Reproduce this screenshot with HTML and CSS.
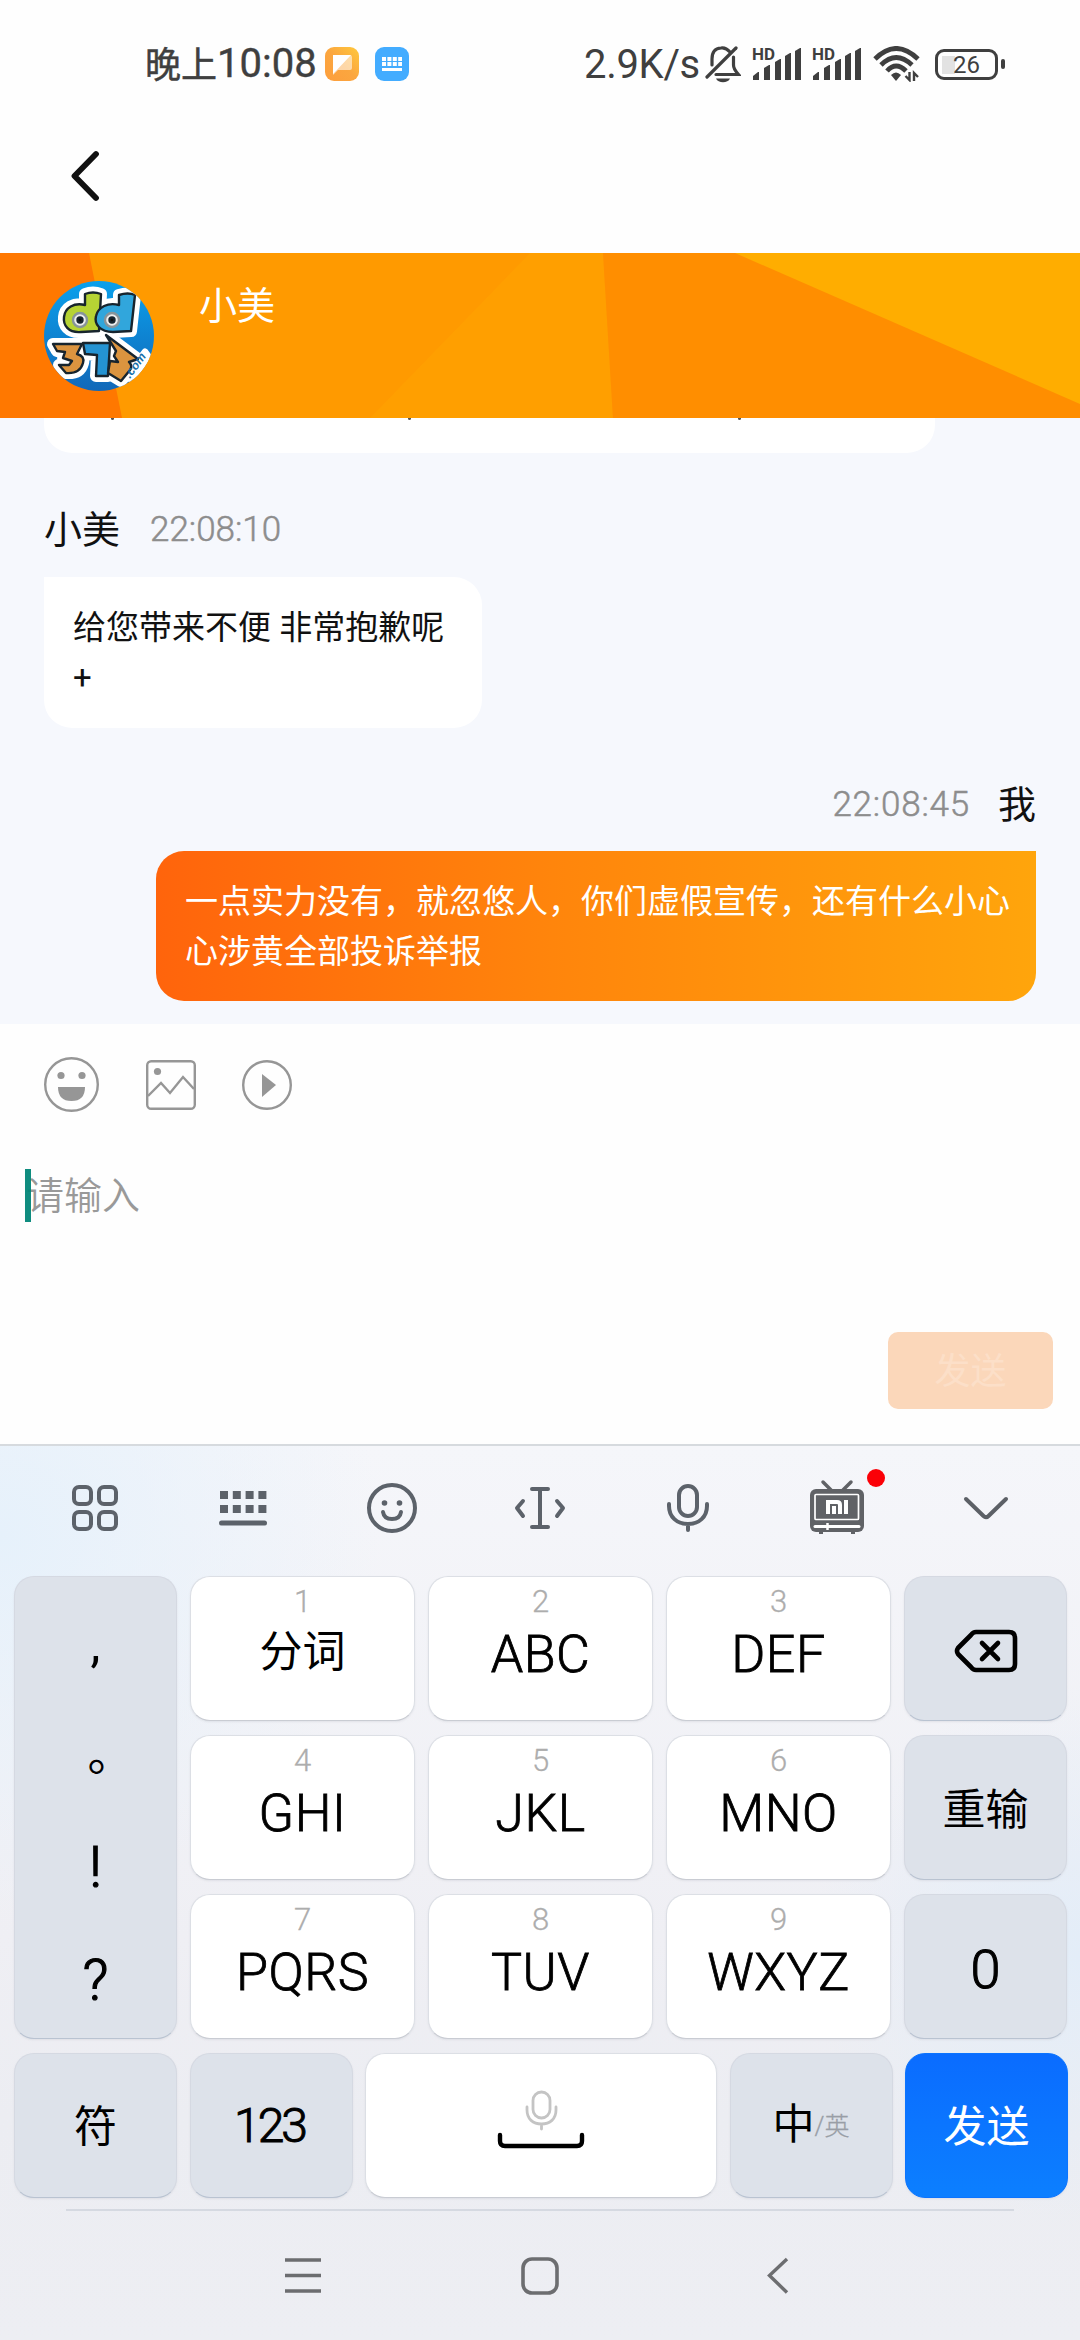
FILE: index.html
```html
<!DOCTYPE html>
<html lang="zh-CN">
<head>
<meta charset="utf-8">
<title>小美</title>
<link rel="stylesheet" href="styles.css">
</head>
<body>
<div class="screen">
  <header class="status">
    <span class="clock"><span class="clock-cjk">晚上</span><span class="clock-num">10:08</span></span>
    <svg class="app-icon" viewBox="0 0 34 34"><defs><linearGradient id="og" x1="1" y1="0" x2="0" y2="1"><stop offset="0" stop-color="#ffc93c"/><stop offset=".5" stop-color="#fba63f"/><stop offset="1" stop-color="#fd9e3c"/></linearGradient></defs><rect width="34" height="34" rx="9" fill="url(#og)"/><path d="M8 8h17q2 0 2 2v11q0 2-2 2H13l-5 5z" fill="#fff" opacity=".55"/><path d="M8 8h18L8 27z" fill="#fff"/></svg>
    <svg class="app-icon second" viewBox="0 0 34 34"><rect width="34" height="34" rx="9" fill="#43acff"/><path d="M7 12h20M7 17h20" stroke="#fff" stroke-width="4" stroke-dasharray="4 1.4"/><path d="M7 22.500h20" stroke="#fff" stroke-width="3"/></svg>
    <span class="speed">2.9K/s</span>
    <svg class="bell" viewBox="0 0 36 38"><g fill="none" stroke="#3f3f3f" stroke-width="3.200" stroke-linecap="round"><path d="M25 7C22 3.500 19 2.500 16 3 9 3.500 7 8 7 14v6"/><path d="M28.500 12v8c0 4 2 6 5 9.500H11"/><path d="M2 32 31 3"/></g><path d="M11 33.500h14c-2 5-12 5-14 0z" fill="#3f3f3f"/></svg>
    <svg class="signal" viewBox="0 -6 52 42"><text x="1" y="14" textLength="23" lengthAdjust="spacingAndGlyphs" class="hd">HD</text><g fill="#3f3f3f"><path d="M2 34v-4l5-4h1v8z"/><path d="M13 34V22l5-3h1v15z"/><path d="M24 34V16l5-3h1v21z"/><path d="M34 34V10l5-3h1v27z"/><path d="M44 34V5l5-3h1v32z"/></g></svg>
    <svg class="signal two" viewBox="0 -6 52 42"><text x="1" y="14" textLength="23" lengthAdjust="spacingAndGlyphs" class="hd">HD</text><g fill="#3f3f3f"><path d="M2 34v-4l5-4h1v8z"/><path d="M13 34V22l5-3h1v15z"/><path d="M24 34V16l5-3h1v21z"/><path d="M34 34V10l5-3h1v27z"/><path d="M44 34V5l5-3h1v32z"/></g></svg>
    <svg class="wifi" viewBox="0 0 48 36"><g fill="none" stroke="#3f3f3f" stroke-width="4.800"><path d="M2 13Q23-8 45 13"/><path d="M8 19Q23 4 39 19"/><path d="M14 25Q23 15 33 25"/></g><path d="M18 29q5-5 10 0l-5 6z" fill="#3f3f3f"/><path d="M36.500 26v8l-4-4M41 35v-8l4 4" fill="none" stroke="#3f3f3f" stroke-width="2.400"/></svg>
    <span class="battery"><span class="battery-body">26</span><span class="battery-tip"></span></span>
  </header>

  <nav class="topbar">
    <svg class="back" viewBox="0 0 32 52"><path d="M27 4 5.500 26 27 48" fill="none" stroke="#111" stroke-width="5.800" stroke-linecap="round" stroke-linejoin="round"/></svg>
  </nav>

  <section class="banner">
    <svg class="banner-bg" viewBox="0 0 1080 165" preserveAspectRatio="none"><rect width="1080" height="165" fill="#ff9a00"/><path d="M0 0h89l33 165H0z" fill="#ff7800"/><path d="M530 0h73l10 165H370z" fill="#ff9f00"/><path d="M603 0h477v165H613z" fill="#ff8e00"/><path d="M735 0h345v151z" fill="#ffad00"/></svg>
    <svg class="avatar" viewBox="0 0 110 110"><defs><linearGradient id="av" x1="0" y1="0" x2="0" y2="1"><stop offset="0" stop-color="#0aa0ec"/><stop offset="1" stop-color="#1268b8"/></linearGradient><clipPath id="round"><circle cx="55" cy="55" r="55"/></clipPath>
      <path id="d1" d="M41 13q8-3 16 0l-2 37-18 1C24 52 19 44 20 36c1-9 10-15 21-12z"/>
      <path id="d2" d="M75 14q9-3 16 0l-4 36-18 1C56 51 50 43 52 35c2-9 12-14 23-11z"/>
      <path id="n1" d="M9 63h29l-5 10q8 2 6 9-3 11-17 10l-7-8h10l3-4-9-3 2-6-8-1z"/>
      <path id="n2" d="M39 62h27l-2 33H52l1-21-12-1z"/>
      <path id="n3" d="m62 54 32 24-9 3q4 4 1 8l-9 11-13-8 2-12 8 1-4-6 2-5z"/>
      <path id="tag" d="m82 97 19-26 5 7-14 20z"/></defs>
      <g clip-path="url(#round)"><rect width="110" height="110" fill="url(#av)"/>
      <g fill="#fff" stroke="#fff" stroke-width="12" stroke-linejoin="round"><use href="#d1"/><use href="#d2"/><use href="#n1"/><use href="#n2"/><use href="#n3"/><use href="#tag" stroke-width="7"/></g>
      <g stroke="#17242d" stroke-width="2.400" stroke-linejoin="round"><use href="#d1" fill="#b6d334"/><use href="#d2" fill="#31a6dc"/>
      <circle cx="36" cy="39" r="7" fill="#eee" stroke="#87949a"/><circle cx="68" cy="39" r="7" fill="#eee" stroke="#87949a"/><circle cx="36" cy="39" r="2.500" fill="#111"/><circle cx="68" cy="39" r="2.500" fill="#111"/>
      <use href="#n1" fill="#db943f"/><use href="#n2" fill="#2493d2"/><use href="#n3" fill="#db943f"/></g>
      <text x="86" y="98" transform="rotate(-54 86 98)" class="dotcom">.com</text></g></svg>
    <h1 class="agent">小美</h1>
  </section>

  <main class="chat">
    <div class="bubble clipped"><i class="speck s1"></i><i class="speck s2"></i><i class="speck s3"></i></div>
    <div class="meta"><span class="who">小美</span><span class="time">22:08:10</span></div>
    <div class="bubble them">给您带来不便&nbsp;非常抱歉呢<br>+</div>
    <div class="meta mine"><span class="time">22:08:45</span><span class="who">我</span></div>
    <div class="bubble me">一点实力没有，就忽悠人，你们虚假宣传，还有什么小心心涉黄全部投诉举报</div>
  </main>

  <section class="composer">
    <div class="tools">
      <svg width="55" height="55" viewBox="0 0 55 55"><circle cx="27.500" cy="27.500" r="26.300" fill="none" stroke="#969696" stroke-width="2.400"/><circle cx="17" cy="18.500" r="3.600" fill="#969696"/><circle cx="38" cy="18.500" r="3.600" fill="#969696"/><path d="M14 30h27q0 14-13.500 14T14 30z" fill="#969696"/></svg>
      <svg class="t2" width="50" height="50" viewBox="0 0 50 50" fill="none" stroke="#969696" stroke-width="2.400"><rect x="1.200" y="1.200" width="47.600" height="47.600" rx="4"/><circle cx="11.500" cy="11.500" r="3.600" fill="#969696" stroke="none"/><path d="m2 36 13-13 9 10 13-16 11 12"/></svg>
      <svg class="t3" width="50" height="50" viewBox="0 0 50 50"><circle cx="25" cy="25" r="23.800" fill="none" stroke="#969696" stroke-width="2.400"/><path d="M20 14v23l14-12z" fill="#969696"/></svg>
    </div>
    <div class="field"><span class="placeholder">请输入</span><i class="caret"></i></div>
    <button class="send">发送</button>
  </section>

  <section class="keyboard">
    <div class="kb-tools">
      <svg viewBox="0 0 60 60" class="ic"><g fill="none" stroke="#5c626a" stroke-width="4"><rect x="9" y="9" width="17" height="17" rx="5"/><rect x="34" y="9" width="17" height="17" rx="5"/><rect x="9" y="34" width="17" height="17" rx="5"/><rect x="34" y="34" width="17" height="17" rx="5"/></g></svg>
      <svg viewBox="0 0 60 60" class="ic"><path d="M7 17h47M7 31h47" stroke="#5c626a" stroke-width="8" stroke-dasharray="8 4.800"/><path d="M8.500 45h43" stroke="#5c626a" stroke-width="5" stroke-linecap="round"/></svg>
      <svg viewBox="0 0 60 60" class="ic"><g fill="none" stroke="#5c626a" stroke-width="4" stroke-linecap="round"><circle cx="30" cy="30" r="23"/><path d="M21 34q1 7 9 7t9-7"/></g><circle cx="22.500" cy="25" r="2.800" fill="#5c626a"/><circle cx="37.500" cy="25" r="2.800" fill="#5c626a"/></svg>
      <svg viewBox="0 0 60 60" class="ic"><g fill="none" stroke="#5c626a" stroke-width="4" stroke-linecap="round" stroke-linejoin="round"><path d="M30 11v38M22 11h16M22 49h16"/><path d="m13 23-6 7 6 8M47 23l6 7-6 8"/></g></svg>
      <svg viewBox="0 0 60 60" class="ic"><g fill="none" stroke="#5c626a" stroke-width="4" stroke-linecap="round"><rect x="21" y="8" width="18" height="30" rx="9"/><path d="M11 26v2c0 11 8 18 19 18s19-7 19-18v-2M30 46v6"/></g></svg>
      <span class="tv"><svg viewBox="0 0 60 60" class="ic"><path d="m16 4 8 8m20-8-8 8" stroke="#606266" stroke-width="3.500" stroke-linecap="round"/><rect x="3" y="11" width="54" height="43" rx="6" fill="#606266"/><path d="M12 54h4v2h-4zm32 0h4v2h-4z" fill="#606266"/><rect x="8" y="16.500" width="43.500" height="25" rx="1" fill="none" stroke="#fff" stroke-width="1.700"/><path d="M8 48.500h44" stroke="#fff" stroke-width="3" stroke-linecap="round"/><path d="M20.500 45v7" stroke="#fff" stroke-width="2.500"/><path d="M21 36V24h9q3 0 3 3v9M27 28v8M39 22v14" fill="none" stroke="#fff" stroke-width="4"/></svg><i class="dot"></i></span>
      <svg viewBox="0 0 60 60" class="ic"><path d="m11 21 17.500 17q2.500 2.500 5 0L51 21" fill="none" stroke="#5c6066" stroke-width="4" stroke-linecap="round"/></svg>
    </div>

    <div class="keys">
      <div class="key grey punct"><span class="p1">,</span><span class="p2">。</span><span class="p3">!</span><span class="p4">?</span></div>
      <div class="key"><small>1</small><b class="cjk">分词</b></div>
      <div class="key"><small>2</small><b>ABC</b></div>
      <div class="key"><small>3</small><b>DEF</b></div>
      <div class="key grey flat del"><svg width="64" height="46" viewBox="0 0 64 46"><path d="M22 4h33q6 0 6 6v26q0 6-6 6H22q-3 0-5-3L4 26q-2-3 0-6L17 7q2-3 5-3z" fill="none" stroke="#000" stroke-width="4.600" stroke-linejoin="round"/><path d="m28 15 16 16m0-16L28 31" stroke="#000" stroke-width="4.600" stroke-linecap="round"/></svg></div>
      <div class="key"><small>4</small><b>GHI</b></div>
      <div class="key"><small>5</small><b>JKL</b></div>
      <div class="key"><small>6</small><b>MNO</b></div>
      <div class="key grey flat han">重输</div>
      <div class="key"><small>7</small><b>PQRS</b></div>
      <div class="key"><small>8</small><b>TUV</b></div>
      <div class="key"><small>9</small><b>WXYZ</b></div>
      <div class="key grey flat zero">0</div>
    </div>
    <div class="keys-bottom">
      <div class="key grey flat han low">符</div>
      <div class="key grey flat num">123</div>
      <div class="key space"><svg width="90" height="62" viewBox="0 0 90 62"><g fill="none" stroke="#c4c4c4" stroke-width="2.800" stroke-linecap="round"><rect x="37" y="3" width="17" height="26" rx="8.500"/><path d="M31 18v3c0 9 6 14 14.500 14S60 30 60 21v-3M45.500 35v5"/></g><path d="M4 46v6q0 5 5 5h72q5 0 5-5v-6" fill="none" stroke="#000" stroke-width="4.400" stroke-linecap="round"/></svg></div>
      <div class="key grey flat lang"><span>中</span><small>/英</small></div>
      <div class="key blue flat han low">发送</div>
    </div>
    <hr class="rule">
    <nav class="sysnav">
      <svg viewBox="0 0 48 48" class="nv"><path d="M6 8h36M6 23.500h36M6 39h36" stroke="#6c6d70" stroke-width="3.600"/></svg>
      <svg viewBox="0 0 48 48" class="nv"><rect x="7" y="7" width="34" height="34" rx="9" fill="none" stroke="#6c6d70" stroke-width="3.600"/></svg>
      <svg viewBox="0 0 48 48" class="nv"><path d="M34 7 16.500 23.500 34 40.500" fill="none" stroke="#6c6d70" stroke-width="3.400"/></svg>
    </nav>
  </section>
</div>
</body>
</html>
```
FILE: styles.css
```css
* { box-sizing: border-box; }
body { margin: 0; background: #fefefe; font-family: Roboto, "Noto Sans CJK SC", sans-serif; color: #111; }
svg { display: block; flex: none; }
.screen { width: 1080px; height: 2340px; overflow: hidden; display: flex; flex-direction: column; }

/* status bar */
.status { height: 128px; flex: none; display: flex; align-items: center; padding-left: 145px; color: #3f3f3f; }
.clock { display: flex; align-items: center; width: 180px; line-height: 50px; white-space: nowrap; }
.clock-cjk { font: 400 36px/46px "Noto Sans CJK SC", sans-serif; -webkit-text-stroke: .5px; padding-bottom: 4px; }
.clock-num { font-size: 40px; font-weight: 400; letter-spacing: 0; -webkit-text-stroke: .4px; }
.app-icon { width: 34px; height: 34px; }
.app-icon.second { margin-left: 16px; }
.speed { margin-left: 175px; width: 121px; font-size: 40px; font-weight: 400; white-space: nowrap; letter-spacing: -.3px; }
.bell { width: 36px; height: 38px; }
.signal { width: 52px; height: 42px; margin: -6px 0 0 10px; }
.signal.two { margin-left: 8px; }
.hd { font: 700 17px Roboto, sans-serif; fill: #3f3f3f; }
.wifi { width: 48px; height: 36px; margin-left: 10px; }
.battery { display: flex; align-items: center; margin-left: 14px; gap: 3px; }
.battery-body { width: 63px; height: 31px; border: 3px solid #3f3f3f; border-radius: 9px; font-size: 24px; line-height: 26px; text-align: center; background: linear-gradient(#e2e2e2, #e2e2e2) 4px 4px / 13px 18px no-repeat; }
.battery-tip { width: 4px; height: 10px; border-radius: 2px; background: #3f3f3f; }

.topbar { height: 125px; flex: none; padding: 22px 0 0 69px; }
.back { width: 32px; height: 52px; }

/* agent banner */
.banner { height: 165px; flex: none; display: grid; grid-template-columns: 44px 110px 45px 1fr; }
.banner-bg { grid-area: 1 / 1 / 2 / 5; width: 1080px; height: 165px; }
.avatar { grid-area: 1 / 2; width: 110px; height: 110px; margin-top: 28px; }
.dotcom { font: italic 700 12px "Liberation Sans", sans-serif; fill: #176fa9; }
.agent { grid-area: 1 / 4; margin: 24px 0 0; font: 400 38px/52px "Noto Sans CJK SC", sans-serif; color: #fff; }

/* conversation */
.chat { height: 606px; flex: none; background: #f6f8fd; padding: 0 44px; display: flex; flex-direction: column; align-items: flex-start; }
.bubble { font-size: 33px; line-height: 50px; background: #fff; border-radius: 0 28px 28px 28px; }
.clipped { width: 891px; height: 35px; border-radius: 0 0 28px 28px; display: flex; }
.speck { width: 3px; height: 2px; background: #555; border-radius: 0 0 2px 2px; }
.s1 { margin-left: 67px; }
.s2 { margin-left: 294px; }
.s3 { margin-left: 327px; }
.meta { display: flex; align-items: center; height: 56px; margin-top: 46px; }
.who { font: 400 38px/56px "Noto Sans CJK SC", sans-serif; color: #111; }
.time { margin: 5px 0 0 30px; font-size: 35px; line-height: 56px; color: #8d8d8d; font-weight: 300; -webkit-text-stroke: .5px; letter-spacing: 0; }
.them { width: 438px; height: 151px; margin-top: 22px; padding: 26px 0 0 29px; }
.mine { align-self: flex-end; height: 50px; margin-top: 49px; }
.mine .who { margin-left: 28px; }
.mine .time { letter-spacing: .8px; }
.me { align-self: flex-end; width: 880px; height: 150px; margin-top: 24px; padding: 26px 22px 0 29px; color: #fff; background: linear-gradient(90deg, #ff640c, #ff850c 45%, #ffa50c); border-radius: 28px 0 28px 28px; }

/* message entry */
.composer { height: 420px; flex: none; background: #fefefe; }
.tools { height: 88px; padding: 33px 0 0 44px; display: flex; align-items: center; }
.t2 { margin-left: 47px; }
.t3 { margin-left: 46px; }
.field { margin-top: 57px; height: 54px; display: grid; padding-left: 25px; }
.placeholder { grid-area: 1 / 1; margin-top: -3px; padding-left: 1px; font: 350 38px/54px "Noto Sans CJK SC", sans-serif; color: #999; }
.caret { grid-area: 1 / 1; width: 6px; height: 53px; background: rgba(0, 133, 119, .94); }
.send { display: block; margin: 109px 0 0 888px; width: 165px; height: 77px; border: 0; border-radius: 10px; background: #fbd7ba; color: #fcdfc8; font: 400 36px/73px "Noto Sans CJK SC", sans-serif; padding: 0 0 4px; }

/* keyboard */
.keyboard { height: 896px; flex: none; border-top: 2px solid #d6dade; background: radial-gradient(circle at 0 10%, #e6f1fb 0, rgba(230, 241, 251, 0) 380px), radial-gradient(circle at 100% 57%, #e3edf8 0, rgba(227, 237, 248, 0) 270px), linear-gradient(#f5f6fa, #efeff4 55%, #ecedf2 75%, #edeef3); }
.kb-tools { height: 130px; padding: 32px 65px 0 65px; display: flex; justify-content: space-between; }
.ic { width: 60px; height: 60px; }
.tv { position: relative; }
.dot { position: absolute; left: 60px; top: -9px; width: 18px; height: 18px; border-radius: 50%; background: #fb0007; }
.keys { display: grid; padding: 0 13px 0 14px; grid-template: repeat(3, 145px) / 163px 225px 225px 225px 163px; gap: 14px 13px; }
.punct { grid-row: 1 / 4; }
.keys-bottom { display: grid; margin-top: 14px; padding: 0 13px 0 14px; grid-template: 145px / 163px 163px 352px 163px 163px; gap: 12.500px; }
.key { background: #fff; border: 1px solid #dcdfe5; border-bottom-color: #c9ccd3; border-radius: 20px; box-shadow: 0 1px 2px #c7cbd366; display: flex; flex-direction: column; align-items: center; color: #000; }
.key small { margin-top: 5px; font-size: 31px; line-height: 40px; color: #adadad; font-weight: 300; -webkit-text-stroke: .3px; }
.key b { margin-top: 3px; font-size: 52px; line-height: 60px; font-weight: 300; letter-spacing: .5px; -webkit-text-stroke: .8px; }
.key .cjk { margin-top: -4px; font: 400 43px/60px "Noto Sans CJK SC", sans-serif; letter-spacing: 0; -webkit-text-stroke: 0; }
.grey { background: #dde2ea; border-color: #d5d9e2; border-bottom-color: #b9c3d1; }
.flat { justify-content: center; }
.del { padding-top: 5px; }
.punct { font-size: 50px; line-height: 60px; padding-top: 37px; }
.punct span { height: 60px; }
.punct .p2 { margin-top: 50px; padding-left: 30px; font-size: 46px; }
.punct .p3 { margin-top: 53px; font-size: 58px; font-weight: 300; -webkit-text-stroke: 1.2px; }
.punct .p4 { margin-top: 54px; font-size: 57px; font-weight: 300; -webkit-text-stroke: 1.2px; }
.han { font: 400 43px/62px "Noto Sans CJK SC", sans-serif; padding-bottom: 3px; }
.han.low { padding-bottom: 6px; }
.zero { font-size: 54px; padding-top: 6px; font-weight: 300; -webkit-text-stroke: 1.1px; }
.num { font-size: 48px; letter-spacing: -3px; font-weight: 300; -webkit-text-stroke: 1px; padding-right: 3px; }
.lang { flex-direction: row; align-items: center; font-size: 42px; }
.lang span { line-height: 62px; margin-top: -9px; font-family: "Noto Sans CJK SC", sans-serif; }
.lang small { font-size: 25px; color: #999ea6; margin-top: 3px; }
.blue { background: linear-gradient(#0a6cff, #0c7fff); border-color: #0b74ff; color: #fff; }
.space svg { margin-top: 35px; }
.rule { margin: 11px 66px 0; border: 0; height: 2px; background: #d5d9e1; }
.sysnav { display: flex; justify-content: space-between; padding: 41px 279px 0 279px; }
.nv { width: 48px; height: 48px; }
```
